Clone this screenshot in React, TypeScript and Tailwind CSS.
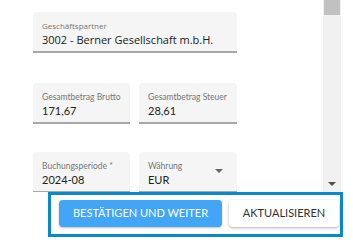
import {memo} from "react";

function Field({label, value, font, labelSize, select}: {label: string; value: string; font: string; labelSize: string; select?: boolean}) {
  return (
    <div className="relative h-[41px] rounded-t-[4px] bg-[#f5f5f5] border-b-2 border-[#a8a8a8] pl-[9px] pt-[8px]">
      <p className={`${font} ${labelSize} leading-[12px] text-[#757575]`}>{label}</p>
      <p className={`${font} text-[11px] leading-[16px] text-[#222]`}>{value}</p>
      {select && (
        <div className="absolute right-[14px] top-[17px] w-0 h-0 border-x-[4px] border-x-transparent border-t-[4px] border-t-[#666]" />
      )}
    </div>
  );
}

function App() {
  const lato = "font-['Lato',sans-serif]";
  const open = "font-['Open_Sans',sans-serif]";

  return (
    <div className="w-[353px] h-[245px] bg-white overflow-hidden">
      <div className="h-[192px] flex overflow-hidden">
        <div className="w-[323px] pl-[33px] pt-[12px]">
          <div className="w-[204px]">
            <Field label="Geschäftspartner" value="3002 - Berner Gesellschaft m.b.H." font={open} labelSize="text-[8px]" />
            <div className="mt-[30px] grid grid-cols-[97px_98px] gap-[9px]">
              <Field label="Gesamtbetrag Brutto" value="171,67" font={lato} labelSize="text-[8.5px]" />
              <Field label="Gesamtbetrag Steuer" value="28,61" font={lato} labelSize="text-[8.5px]" />
            </div>
            <div className="mt-[28px] grid grid-cols-[97px_98px] gap-[9px]">
              <Field label="Buchungsperiode *" value="2024-08" font={lato} labelSize="text-[8.5px]" />
              <Field label="Währung" value="EUR" font={lato} labelSize="text-[8.5px]" select />
            </div>
          </div>
        </div>
        <div className="w-[18px] bg-[#f1f1f1] flex flex-col items-center">
          <div className="w-[16px] h-[15px] bg-[#c1c1c1]" />
          <div className="flex-1" />
          <div className="mb-[6px] w-0 h-0 border-x-[4px] border-x-transparent border-t-[4px] border-t-[#505050]" />
        </div>
      </div>
      <div className="ml-[48px] w-[295px] h-[45px] border-[3px] border-[#0a88cc] bg-white flex items-start gap-[7px] pl-[8px] pt-[5px]">
        <button
          className={`${lato} h-[27px] w-[163px] rounded-[4px] bg-[#42a5f5] text-white text-[11px] shadow-[0_1px_2px_rgba(0,0,0,0.25)]`}
        >
          BESTÄTIGEN UND WEITER
        </button>
        <button
          className={`${lato} h-[27px] w-[110px] rounded-[4px] bg-white text-[#333] text-[11px] shadow-[0_1px_3px_rgba(0,0,0,0.3)]`}
        >
          AKTUALISIEREN
        </button>
      </div>
    </div>
  );
}

export default memo(App);
